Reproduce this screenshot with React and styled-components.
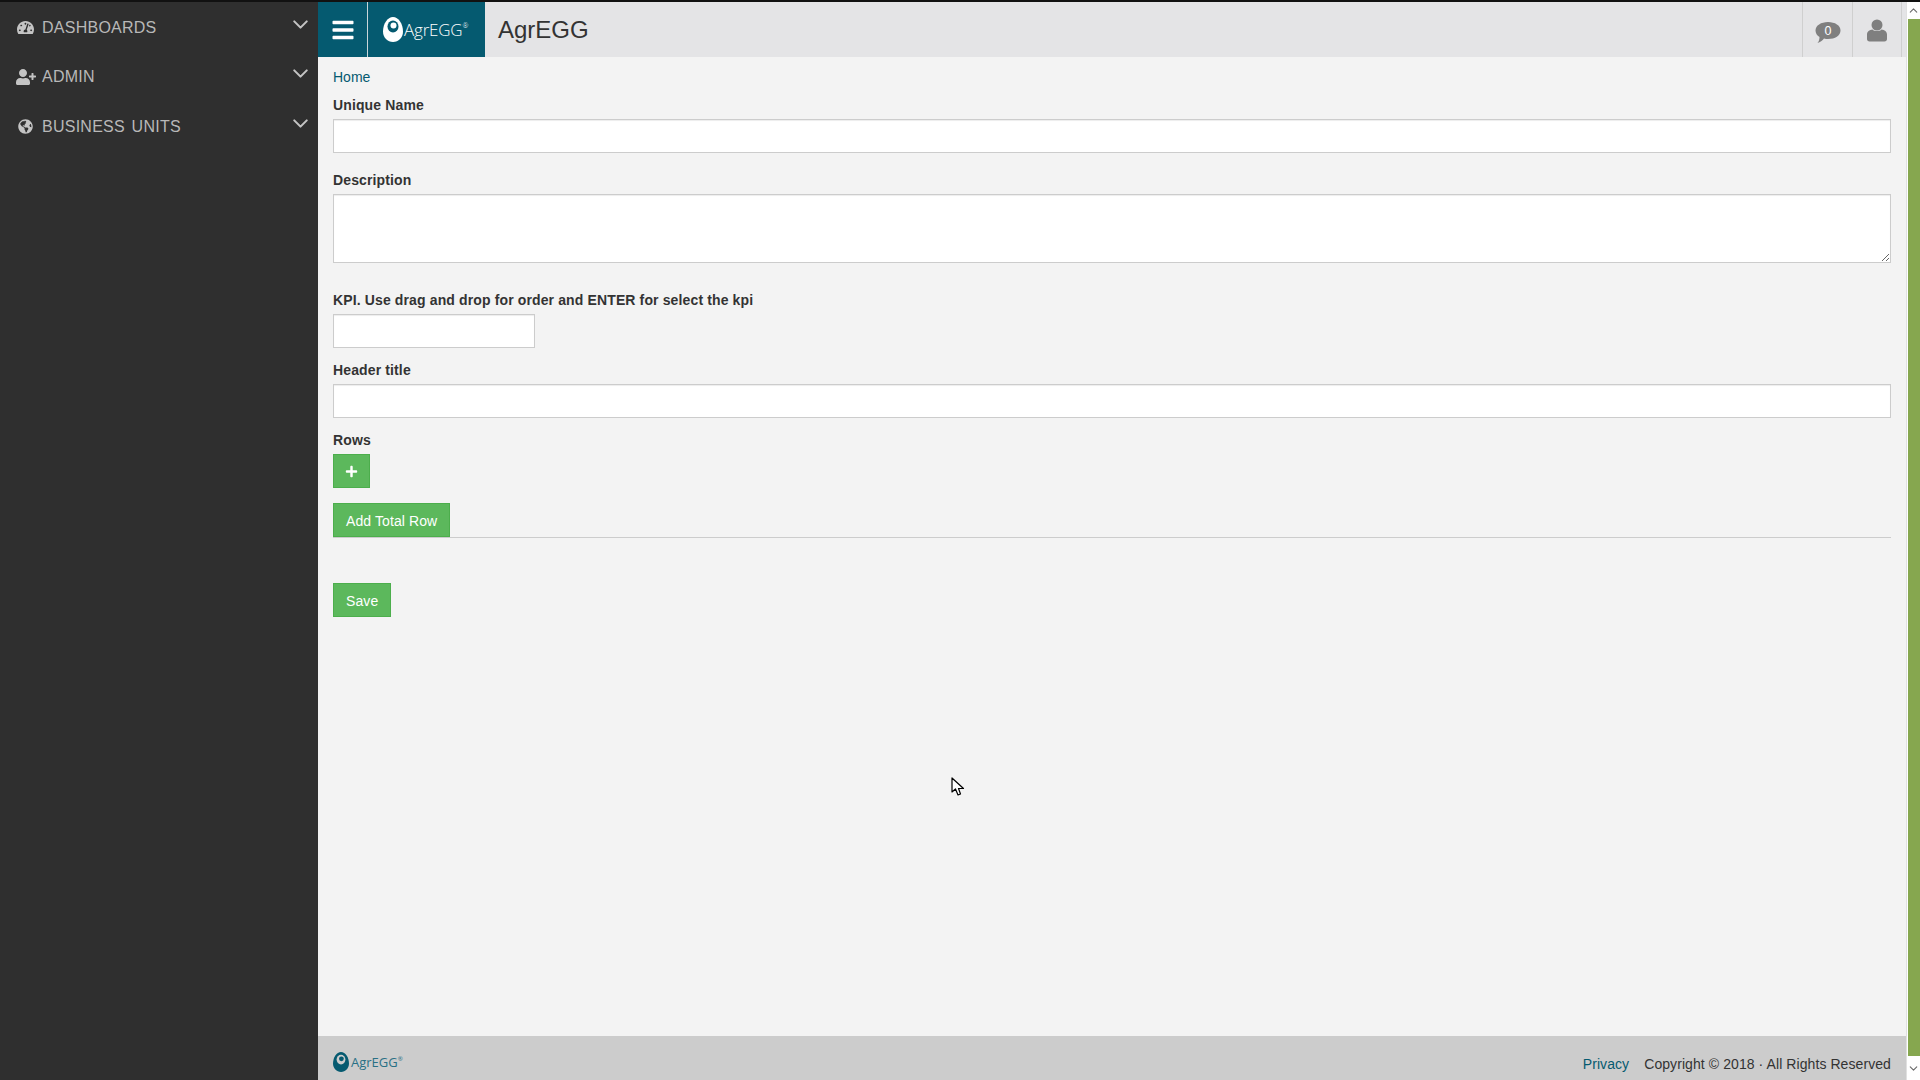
import styled, { createGlobalStyle } from 'styled-components';
import { FaBars, FaPlus, FaTachometerAlt, FaUserPlus, FaGlobeAmericas } from 'react-icons/fa';
import { ChevronDown, ChevronUp } from 'lucide-react';

const menu = [
  { label: 'DASHBOARDS', Icon: FaTachometerAlt, size: 17 },
  { label: 'ADMIN', Icon: FaUserPlus, size: 20 },
  { label: 'BUSINESS UNITS', Icon: FaGlobeAmericas, size: 15 },
];

const EggLogo = ({ size, color, hole }) => (
  <svg width={size * 0.8} height={size} viewBox="0 0 20 25">
    <path d="M10 0C15.5 0 20 7 20 14.5C20 20.5 15.5 25 10 25C4.500 25 0 20.500 0 14.500C0 7 4.500 0 10 0Z" fill={color} />
    <ellipse cx="10" cy="9.500" rx="5.500" ry="6" fill={hole} />
    <circle cx="10.500" cy="8.500" r="3" fill={color} />
  </svg>
);

const App = () => {
  return (
    <Page>
      <GlobalStyle />
      <Sidebar>
        {menu.map(({ label, Icon, size }) => (
          <MenuItem key={label}>
            <MenuIcon><Icon size={size} /></MenuIcon>
            <MenuLabel>{label}</MenuLabel>
            <MenuChevron><ChevronDown size={25} strokeWidth={2} /></MenuChevron>
          </MenuItem>
        ))}
      </Sidebar>
      <Main>
        <Header>
          <MenuToggle><FaBars /></MenuToggle>
          <Brand>
            <EggLogo size={25} color="#fff" hole="#055a70" />
            <BrandName>AgrEGG<sup>®</sup></BrandName>
          </Brand>
          <Title>AgrEGG</Title>
          <HeaderButton $drop="5px">
            <svg width="26" height="23" viewBox="0 0 26 23">
              <path d="M13 1C20 1 25.500 4.500 25.500 9.500C25.500 14.500 20 18 13 18C11.500 18 10.500 18 9 17.500C7.500 19.500 5 21.500 2.500 22C4 20.500 4.500 18 4.500 16C2 14.500 .500 12 .500 9.500C.500 4.500 6 1 13 1Z" fill="#7f7f7f" />
              <text x="13" y="14" textAnchor="middle" fontSize="12.500" fill="#fff" fontFamily="Liberation Sans, sans-serif">0</text>
            </svg>
          </HeaderButton>
          <HeaderButton $drop="1px">
            <svg width="20" height="23" viewBox="0 0 20 23">
              <circle cx="10" cy="6" r="5.500" fill="#7f7f7f" />
              <path d="M5.500 10.500C7 12.500 13 12.500 14.500 10.500C17.500 11 20 12.500 20 15.500V20C20 21.500 19 22.500 17.500 22.500H2.500C1 22.500 0 21.500 0 20V15.500C0 12.500 2.500 11 5.500 10.500Z" fill="#7f7f7f" />
            </svg>
          </HeaderButton>
        </Header>
        <Content>
          <Breadcrumb>Home</Breadcrumb>
          <Field $gap="17px">
            <Label>Unique Name</Label>
            <Input />
          </Field>
          <Field $gap="27px">
            <Label>Description</Label>
            <Textarea />
          </Field>
          <Field $gap="12px">
            <Label>KPI. Use drag and drop for order and ENTER for select the kpi</Label>
            <Input $width="202px" />
          </Field>
          <Field $gap="12px">
            <Label>Header title</Label>
            <Input />
          </Field>
          <Field $gap="15px">
            <Label>Rows</Label>
            <GreenButton $icon><FaPlus /></GreenButton>
          </Field>
          <TotalRow>
            <GreenButton>Add Total Row</GreenButton>
          </TotalRow>
          <SaveRow>
            <GreenButton>Save</GreenButton>
          </SaveRow>
        </Content>
        <Footer>
          <FooterBrand>
            <EggLogo size={20} color="#055a70" hole="#ccc" />
            <FooterName>AgrEGG<sup>®</sup></FooterName>
          </FooterBrand>
          <FooterLinks>
            <FooterLink>Privacy</FooterLink>
            <span>Copyright © 2018 · All Rights Reserved</span>
          </FooterLinks>
        </Footer>
      </Main>
      <Scrollbar>
        <ScrollArrow $height="17px"><ChevronUp size={13} strokeWidth={2} /></ScrollArrow>
        <ScrollThumb />
        <ScrollArrow $height="24px"><ChevronDown size={13} strokeWidth={2} /></ScrollArrow>
      </Scrollbar>
      <Cursor width="14" height="20" viewBox="0 0 14 20">
        <path d="M1 1V15L4.500 12L7 18L9.500 17L7.500 11.500L12.500 11.500Z" fill="#fff" stroke="#000" strokeWidth="1.200" strokeLinejoin="round" />
      </Cursor>
    </Page>
  );
}

const GlobalStyle = createGlobalStyle`
  * {
    box-sizing: border-box;
  }

  body {
    margin: 0;
    background: #f3f3f3;
    font-family: 'Liberation Sans', Arial, sans-serif;
    font-size: 14px;
    color: #333333;
    overflow: hidden;
  }
`

const Page = styled.div`
  position: relative;
  display: flex;
  width: 1920px;
  height: 1080px;
  overflow: hidden;
  border-top: 2px solid #111111;
`

const Sidebar = styled.nav`
  width: 318px;
  flex-shrink: 0;
  padding-top: 1px;
  background-color: #2f2f2f;
`

const MenuItem = styled.div`
  display: flex;
  align-items: center;
  height: 49.500px;
  padding-left: 17px;
  color: #b8b8b8;
`

const MenuIcon = styled.span`
  display: flex;
  justify-content: center;
  width: 17px;
  margin-right: 8px;
  color: #c4c4c4;

  svg {
    flex-shrink: 0;
  }
`

const MenuLabel = styled.span`
  flex: 1;
  font-size: 16px;
  letter-spacing: 0.25px;
  word-spacing: 2px;
`

const MenuChevron = styled.span`
  display: flex;
  margin-right: 5px;
  margin-top: -7px;
  color: #c4c4c4;
`

const Main = styled.div`
  display: flex;
  flex-direction: column;
  flex: 1;
  min-width: 0;
`

const Header = styled.header`
  display: flex;
  align-items: stretch;
  height: 55px;
  padding-right: 4px;
  background-color: #e4e4e6;
`

const MenuToggle = styled.div`
  display: flex;
  align-items: center;
  justify-content: center;
  width: 50px;
  border-right: 1px solid #c9d6da;
  background-color: #055a70;
  color: #ffffff;
  font-size: 24px;
`

const Brand = styled.div`
  display: flex;
  align-items: center;
  width: 117px;
  padding-left: 15px;
  gap: 1px;
  background-color: #055a70;
`

const BrandName = styled.span`
  font-family: 'Open Sans', sans-serif;
  font-size: 17px;
  font-weight: 300;
  letter-spacing: -0.2px;
  color: #ffffff;

  sup {
    font-size: 7px;
    vertical-align: 8px;
    line-height: 0;
  }
`

const Title = styled.div`
  flex: 1;
  align-self: center;
  padding-left: 13px;
  padding-top: 1px;
  font-size: 24px;
  color: #333333;
`

const HeaderButton = styled.div`
  display: flex;
  align-items: center;
  justify-content: center;
  width: 50px;
  padding-top: ${(props) => props.$drop};
  border-left: 1px solid #cfcfcf;

  &:last-child {
    border-right: 1px solid #cfcfcf;
  }
`

const Content = styled.main`
  flex: 1;
  padding: 0 15px;
`

const Breadcrumb = styled.a`
  display: block;
  height: 38px;
  padding-top: 12px;
  color: #055a70;
`

const Field = styled.div`
  margin-bottom: ${(props) => props.$gap};
`

const Label = styled.label`
  display: block;
  margin-bottom: 4px;
  line-height: 20px;
  font-weight: 700;
  letter-spacing: 0.13px;
  color: #333333;
`

const Input = styled.input`
  display: block;
  width: ${(props) => props.$width || '100%'};
  height: 34px;
  border: 1px solid #cccccc;
  background-color: #ffffff;
  box-shadow: inset 0 1px 1px rgba(0, 0, 0, 0.075);
`

const Textarea = styled.textarea`
  display: block;
  width: 100%;
  height: 69px;
  border: 1px solid #cccccc;
  background-color: #ffffff;
  box-shadow: inset 0 1px 1px rgba(0, 0, 0, 0.075);
`

const GreenButton = styled.button`
  display: flex;
  align-items: center;
  justify-content: center;
  height: 34px;
  padding: 1px ${(props) => (props.$icon ? '11px' : '12px')} 0;
  border: 1px solid #4cae4c;
  background-color: #5cb85c;
  font-family: inherit;
  font-size: ${(props) => (props.$icon ? '13px' : '14px')};
  letter-spacing: 0.1px;
  color: #ffffff;
`

const TotalRow = styled.div`
  height: 35px;
  border-bottom: 1px solid #cccccc;
`

const SaveRow = styled.div`
  margin-top: 45px;
`

const Footer = styled.footer`
  display: flex;
  align-items: center;
  justify-content: space-between;
  height: 44px;
  padding: 0 15px;
  background-color: #cccccc;
`

const FooterBrand = styled.div`
  display: flex;
  align-items: center;
  gap: 2px;
  padding-top: 7px;
`

const FooterName = styled.span`
  font-family: 'Open Sans', sans-serif;
  font-size: 13px;
  color: #2a7085;

  sup {
    font-size: 6px;
    vertical-align: 6px;
    line-height: 0;
  }
`

const FooterLinks = styled.div`
  display: flex;
  gap: 15px;
  padding-top: 11px;
  letter-spacing: 0.08px;
`

const FooterLink = styled.a`
  color: #055a70;
`

const Scrollbar = styled.div`
  display: flex;
  flex-direction: column;
  width: 14px;
  flex-shrink: 0;
  border-left: 1px solid #e0e0e0;
  background-color: #ffffff;
`

const ScrollArrow = styled.div`
  display: flex;
  align-items: center;
  justify-content: center;
  height: ${(props) => props.$height};
  color: #6a6a6a;
`

const ScrollThumb = styled.div`
  flex: 1;
  margin-left: 1px;
  background-color: #86a74f;
`

const Cursor = styled.svg`
  position: absolute;
  left: 951px;
  top: 775px;
`

export default App;
